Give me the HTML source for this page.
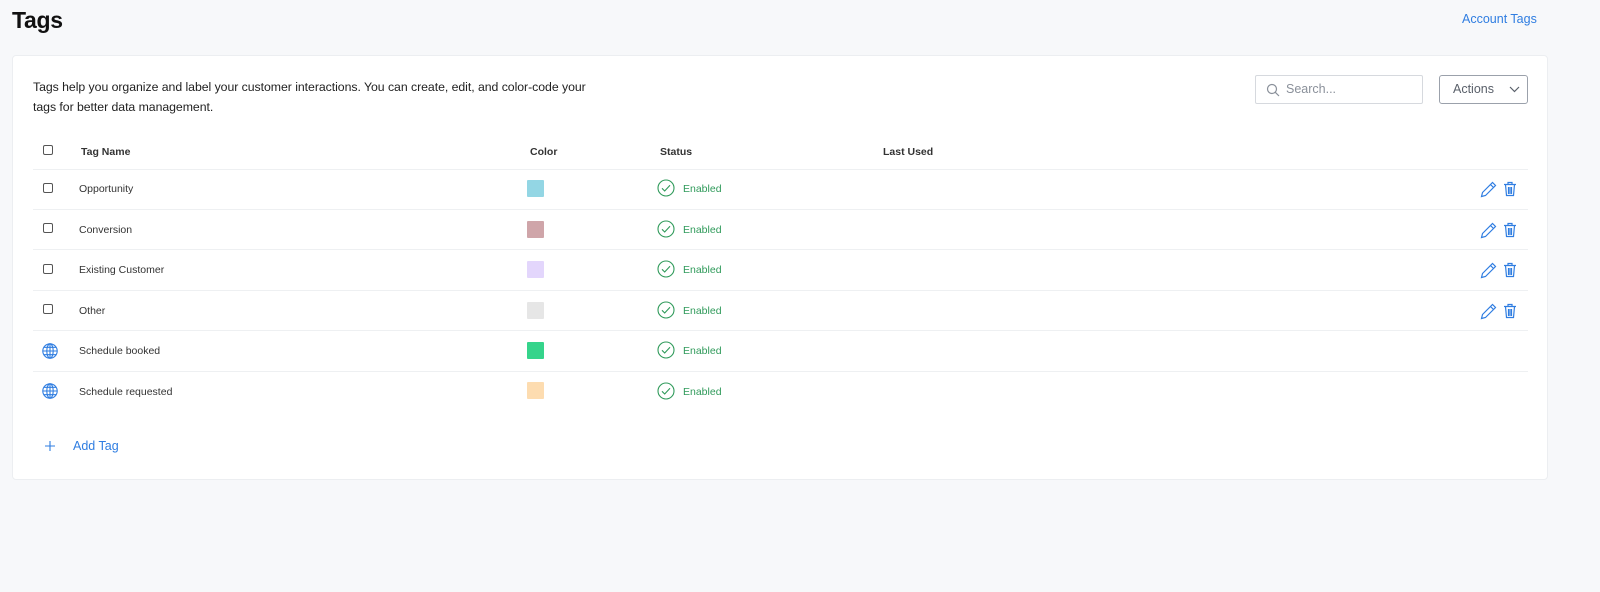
<!DOCTYPE html>
<html><head><style>
*{box-sizing:border-box;margin:0;padding:0}
body{width:1600px;height:592px;background:#f7f8fa;font-family:"Liberation Sans",sans-serif;position:relative;overflow:hidden;color:#222}
.abs{position:absolute}
h1{position:absolute;left:12px;top:7px;font-size:23px;font-weight:bold;color:#111;letter-spacing:-0.3px}
.acct{left:1462px;top:12px;font-size:12.5px;color:#2f7de1}
.card{left:12px;top:55px;width:1536px;height:425px;background:#fff;border:1px solid #eceef1;border-radius:4px}
.desc{left:33px;top:77px;font-size:12.3px;line-height:20px;color:#222;width:700px;letter-spacing:-0.05px;white-space:nowrap}
.search{left:1255px;top:75px;width:168px;height:29px;border:1px solid #d6d9de;border-radius:2px;font-size:12.5px;color:#8a909a}
.actions{left:1439px;top:75px;width:89px;height:29px;border:1px solid #9ba1ab;border-radius:3px;font-size:12.5px;color:#5a606a}
.th{font-size:10.5px;font-weight:bold;color:#333;top:146px}
.line{left:33px;width:1495px;height:1px;background:#eef0f2}
.cb{width:10px;height:10px;border:1px solid #555;border-radius:2px;left:43px}
.name{left:79px;font-size:10.5px;color:#333}
.sw{left:527px;width:17px;height:17px;border-radius:1px}
.st{left:683px;font-size:10.5px;color:#2f9a5a}
</style></head><body>
<h1>Tags</h1>
<div class="abs acct">Account Tags</div>
<div class="abs card"></div>
<div class="abs desc">Tags help you organize and label your customer interactions. You can create, edit, and color-code your<br>tags for better data management.</div>
<div class="abs search"><svg class="abs" style="left:10px;top:7px" width="14" height="14" viewBox="0 0 14 14" fill="none" stroke="#8a909a" stroke-width="1.2"><circle cx="6" cy="6" r="4.5"/><path d="M9.3 9.3L13 13"/></svg><span class="abs" style="left:30px;top:6px">Search...</span></div>
<div class="abs actions"><span class="abs" style="left:13px;top:6px">Actions</span><svg class="abs" style="left:69px;top:10px" width="11" height="7" viewBox="0 0 11 7" fill="none" stroke="#5a606a" stroke-width="1.2"><path d="M1 1l4.5 4.5L10 1"/></svg></div>
<div class="abs cb" style="top:145px"></div>
<div class="abs th" style="left:81px">Tag Name</div>
<div class="abs th" style="left:530px">Color</div>
<div class="abs th" style="left:660px">Status</div>
<div class="abs th" style="left:883px">Last Used</div>

<div class="abs line" style="top:169px"></div>
<div class="abs line" style="top:209px"></div>
<div class="abs line" style="top:249px"></div>
<div class="abs line" style="top:290px"></div>
<div class="abs line" style="top:330px"></div>
<div class="abs line" style="top:371px"></div>

<div class="abs cb" style="top:183px"></div>
<div class="abs name" style="top:183px">Opportunity</div>
<div class="abs sw" style="top:180px;background:#93d6e4"></div>
<div class="abs cb" style="top:223px"></div>
<div class="abs name" style="top:224px">Conversion</div>
<div class="abs sw" style="top:221px;background:#cfa5a9"></div>
<div class="abs cb" style="top:264px"></div>
<div class="abs name" style="top:264px">Existing Customer</div>
<div class="abs sw" style="top:261px;background:#e3d6fc"></div>
<div class="abs cb" style="top:304px"></div>
<div class="abs name" style="top:305px">Other</div>
<div class="abs sw" style="top:302px;background:#e6e6e6"></div>
<div class="abs name" style="top:345px">Schedule booked</div>
<div class="abs sw" style="top:342px;background:#35d48b"></div>
<div class="abs name" style="top:386px">Schedule requested</div>
<div class="abs sw" style="top:382px;background:#fddcb0"></div>

<svg class="abs" style="left:0;top:0" width="1600" height="592">
<defs>
<g id="chk"><circle cx="9" cy="9" r="8" fill="none" stroke="#2f9a5a" stroke-width="1.1"/><path d="M5 9.3l2.7 2.7L13 6.2" fill="none" stroke="#2f9a5a" stroke-width="1.1"/></g>
<g id="ed" fill="none" stroke="#2f7de1" stroke-width="1.2"><path d="M1.5 16.5l1-4L12.5 2.5l3 3-10 10z M10.5 4.5l3 3"/></g>
<g id="tr" fill="none" stroke="#2f7de1" stroke-width="1.2"><path d="M1 3.5h12M5 3.5V1.5h4v2M2.5 3.5l1 11h7l1-11M5.5 6v7M7 6v7M8.5 6v7"/></g>
<g id="gl" fill="none" stroke="#2f7de1" stroke-width="1.1"><circle cx="8" cy="8" r="7.2"/><ellipse cx="8" cy="8" rx="3.2" ry="7.2"/><path d="M8 .8v14.4M.8 8h14.4M2 4.3h12M2 11.7h12"/></g>
</defs>
<use href="#chk" x="657" y="179"/><use href="#chk" x="657" y="220"/><use href="#chk" x="657" y="260"/>
<use href="#chk" x="657" y="301"/><use href="#chk" x="657" y="341"/><use href="#chk" x="657" y="382"/>
<use href="#ed" x="1480" y="180"/><use href="#tr" x="1503" y="181"/>
<use href="#ed" x="1480" y="221"/><use href="#tr" x="1503" y="222"/>
<use href="#ed" x="1480" y="261"/><use href="#tr" x="1503" y="262"/>
<use href="#ed" x="1480" y="302"/><use href="#tr" x="1503" y="303"/>
<use href="#gl" x="42" y="343"/><use href="#gl" x="42" y="383"/>
<path d="M50 441v10M45 446h10" stroke="#2f7de1" stroke-width="1.1"/>
</svg>
<div class="abs st" style="top:183px">Enabled</div>
<div class="abs st" style="top:224px">Enabled</div>
<div class="abs st" style="top:264px">Enabled</div>
<div class="abs st" style="top:305px">Enabled</div>
<div class="abs st" style="top:345px">Enabled</div>
<div class="abs st" style="top:386px">Enabled</div>
<div class="abs" style="left:73px;top:439px;font-size:12.5px;color:#2f7de1">Add Tag</div>
</body></html>
